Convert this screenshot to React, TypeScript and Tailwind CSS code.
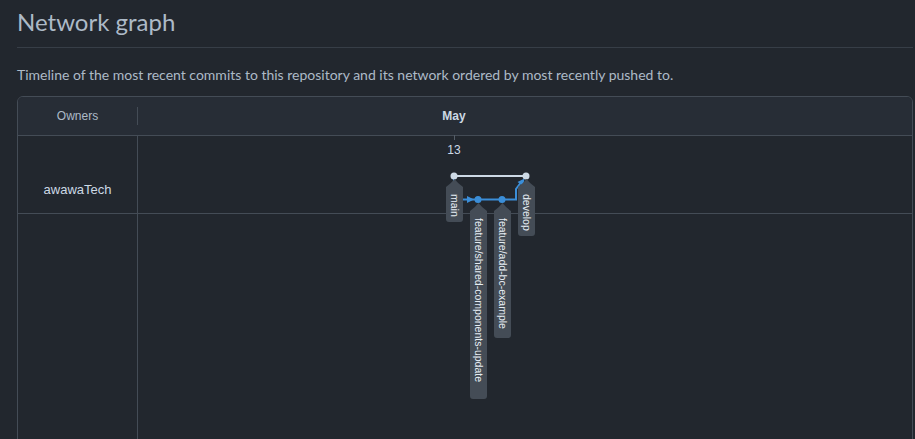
import React from 'react';

type Branch = {
  name: string;
  x: number;
  tip: number;
  bottom: number;
};

// label tags hanging under each branch head, page coordinates
const branches: Branch[] = [
  { name: 'main', x: 454.5, tip: 179, bottom: 222 },
  { name: 'feature/shared-components-update', x: 478.5, tip: 203, bottom: 399 },
  { name: 'feature/add-bc-example', x: 502.5, tip: 203, bottom: 338 },
  { name: 'develop', x: 526.5, tip: 179, bottom: 236 },
];

const tagPath = (b: Branch) => {
  const l = b.x - 8.5;
  const r = b.x + 8.5;
  const t = b.tip;
  const btm = b.bottom;
  return `M${b.x} ${t} Q${b.x + 3} ${t + 4} ${r} ${t + 8} V${btm - 3} Q${r} ${btm} ${r - 3} ${btm} H${l + 3} Q${l} ${btm} ${l} ${btm - 3} V${t + 8} Q${b.x - 3} ${t + 4} ${b.x} ${t} Z`;
};

const GraphCanvas: React.FC = () => {
  const blue = '#3b8ed8';
  const white = '#cdd9e5';
  return (
    <svg className="absolute inset-0 pointer-events-none" width="895" height="400">
      <g transform="translate(-18 -97)" fontFamily="'Liberation Sans', Arial, sans-serif">
        <text x="454" y="120" textAnchor="middle" fontSize="12" fontWeight="bold" fill="#cdd9e5">May</text>
        <line x1="454.5" y1="135" x2="454.5" y2="140" stroke="#545d68" strokeWidth="1" />
        <text x="454" y="154" textAnchor="middle" fontSize="12" fill="#cdd9e5">13</text>

        {/* main -> develop */}
        <line x1="454" y1="176" x2="526" y2="176" stroke={white} strokeWidth="2" />

        {/* feature branches */}
        <path d="M454 176 V199.5 H516 V189 L522 181" fill="none" stroke={blue} strokeWidth="2" />
        <polygon points="467,196 474,199.5 467,203" fill={blue} />
        <polygon points="524.5,178.5 523,186 517.5,182" fill={blue} />

        <circle cx="478" cy="199.5" r="3.5" fill={blue} />
        <circle cx="502" cy="199.5" r="3.5" fill={blue} />
        <circle cx="454" cy="176" r="3.5" fill={white} />
        <circle cx="526" cy="176" r="3.5" fill={white} />

        {branches.map((b) => (
          <g key={b.name}>
            <path d={tagPath(b)} fill="#444c56" />
            <text
              x={b.x}
              y={b.tip + 15}
              transform={`rotate(90 ${b.x} ${b.tip + 15})`}
              fontSize="10.5"
              fill="#e6edf3"
              dominantBaseline="central"
            >
              {b.name}
            </text>
          </g>
        ))}
      </g>
    </svg>
  );
};

export default function App() {
  return (
    <div className="min-h-screen bg-[#22272e] pl-[17px] pr-[2px] font-['Lato','Noto_Sans',sans-serif] text-[#adbac7]">
      <h2 className="pt-[6px] pb-[9px] text-2xl font-normal border-b border-[#373e47]">Network graph</h2>
      <p className="mt-[17px] text-sm">
        Timeline of the most recent commits to this repository and its network ordered by most recently pushed to.
      </p>
      <div className="relative mt-[11px] h-[520px] border border-[#444c56] rounded-md overflow-hidden flex flex-col font-['Liberation_Sans',Arial,sans-serif]">
        <div className="flex h-[39px] shrink-0 bg-[#272d36] border-b border-[#444c56]">
          <div className="w-[119px] flex items-center justify-center text-xs text-[#adbac7]">Owners</div>
          <div className="w-px h-[18px] self-center bg-[#444c56]" />
          <div className="flex-1" />
        </div>
        <div className="flex h-[78px] shrink-0 border-b border-[#444c56]">
          <div className="w-[119px] pt-[44px] text-center text-[13px] text-[#cdd9e5]">awawaTech</div>
          <div className="w-px bg-[#444c56]" />
          <div className="flex-1" />
        </div>
        <div className="flex flex-1">
          <div className="w-[119px]" />
          <div className="w-px bg-[#444c56]" />
          <div className="flex-1" />
        </div>
        <GraphCanvas />
      </div>
    </div>
  );
}
